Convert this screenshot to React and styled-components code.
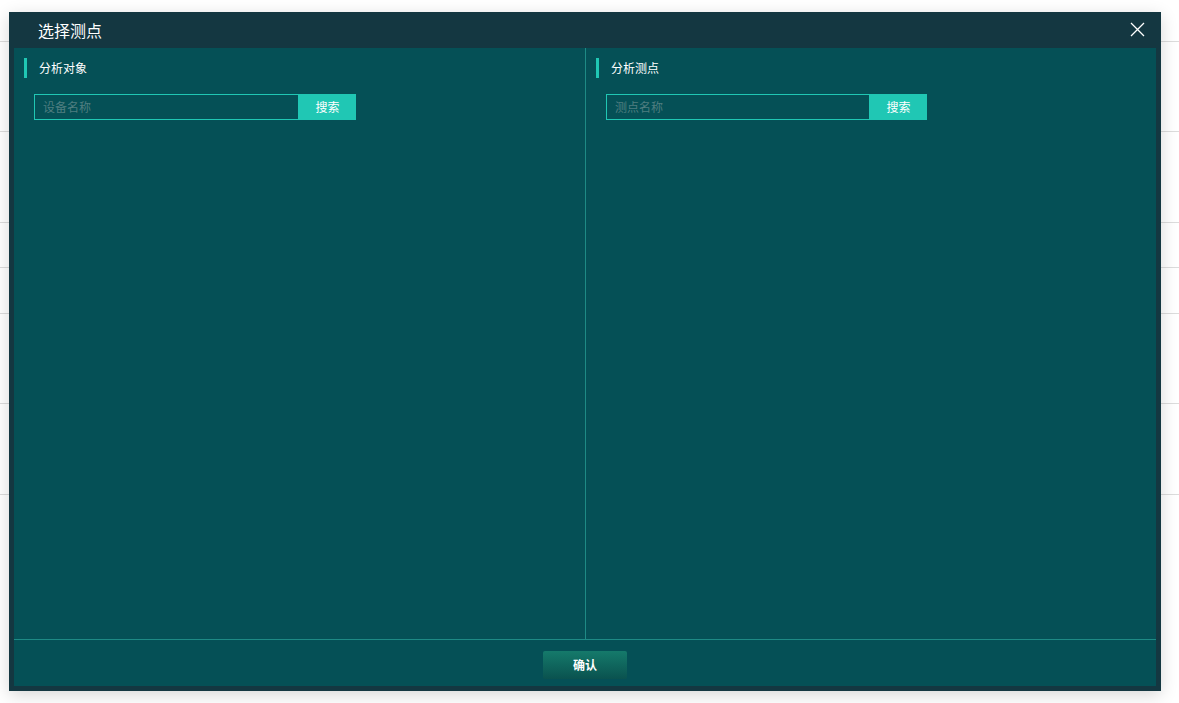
import styled, { createGlobalStyle } from "styled-components";

const GlobalStyle = createGlobalStyle`
  html, body {
    margin: 0;
    padding: 0;
    background: #ffffff;
    font-family: "Noto Sans CJK SC", "Noto Sans", sans-serif;
  }
`;

const Page = styled.div`
  position: relative;
  width: 1179px;
  height: 703px;
  overflow: hidden;
  background: #ffffff;
`;

const BgRow = styled.div`
  height: ${({ h }) => h}px;
  border-bottom: 1px solid #dcdcdc;
  box-sizing: border-box;
`;

const Modal = styled.div`
  position: absolute;
  left: 9px;
  top: 12px;
  width: 1152px;
  height: 679px;
  display: flex;
  flex-direction: column;
  background: #143741;
  box-shadow: 0 4px 16px rgba(0, 0, 0, 0.16);
  padding: 0 5px 5px;
  box-sizing: border-box;
`;

const Header = styled.div`
  height: 36px;
  flex: none;
  display: flex;
  align-items: center;
  justify-content: space-between;
  padding: 0 9px 1px 24px;
  box-sizing: border-box;
`;

const Title = styled.span`
  color: #ffffff;
  font-size: 16px;
`;

const Close = styled.button`
  width: 20px;
  height: 20px;
  padding: 0;
  border: 0;
  background: none;
  display: flex;
  align-items: center;
  justify-content: center;
  cursor: pointer;
`;

const Body = styled.div`
  flex: 1;
  display: flex;
  flex-direction: column;
  background: #055056;
`;

const Panels = styled.div`
  flex: 1;
  display: grid;
  grid-template-columns: 571px 1fr;
  border-bottom: 1px solid #1e8a85;
  padding-bottom: 2px;
`;

const Panel = styled.div`
  padding: 10px 10px 0;
  border-left: ${({ divided }) => (divided ? "1px solid #1e8a85" : "none")};
  margin-bottom: -2px;
`;

const SectionTitle = styled.div`
  height: 20px;
  display: flex;
  align-items: center;
  border-left: 3px solid #20c7b4;
  padding-left: 12px;
  padding-bottom: 1px;
  box-sizing: border-box;
  color: #ffffff;
  font-size: 12px;
`;

const SearchRow = styled.div`
  display: flex;
  margin: 16px 0 0 10px;
  height: 26px;
`;

const Input = styled.input`
  width: ${({ w }) => w}px;
  height: 26px;
  box-sizing: border-box;
  border: 1px solid #20c7b4;
  background: transparent;
  color: #ffffff;
  font-family: inherit;
  font-size: 12px;
  padding: 0 8px 2px;
  outline: none;

  &::placeholder {
    color: #4f7e80;
  }
`;

const SearchButton = styled.button`
  width: 57px;
  height: 26px;
  border: 0;
  background: #20c7b4;
  color: #ffffff;
  font-family: inherit;
  font-size: 12px;
  padding: 0 0 2px;
  cursor: pointer;
`;

const Footer = styled.div`
  height: 46px;
  flex: none;
  display: flex;
  align-items: flex-start;
  justify-content: center;
  padding-top: 11px;
  box-sizing: border-box;
`;

const ConfirmButton = styled.button`
  width: 84px;
  height: 28px;
  border: 0;
  border-radius: 2px;
  background: linear-gradient(180deg, #157a6b 0%, #0a524f 100%);
  color: #ffffff;
  font-family: inherit;
  font-size: 12px;
  font-weight: bold;
  padding: 0 0 2px;
  cursor: pointer;
`;

const rows = [42, 90, 91, 45, 46, 90, 91];

const SearchPanel = ({ title, placeholder, width, divided }) => (
  <Panel divided={divided}>
    <SectionTitle>{title}</SectionTitle>
    <SearchRow>
      <Input w={width} placeholder={placeholder} />
      <SearchButton>搜索</SearchButton>
    </SearchRow>
  </Panel>
);

export default function App() {
  return (
    <Page>
      <GlobalStyle />
      {rows.map((h, i) => (
        <BgRow key={i} h={h} />
      ))}
      <Modal>
        <Header>
          <Title>选择测点</Title>
          <Close aria-label="关闭">
            <svg width="15" height="15" viewBox="0 0 15 15">
              <path d="M1 1L14 14M14 1L1 14" stroke="#ffffff" strokeWidth="1.3" />
            </svg>
          </Close>
        </Header>
        <Body>
          <Panels>
            <SearchPanel title="分析对象" placeholder="设备名称" width={265} />
            <SearchPanel title="分析测点" placeholder="测点名称" width={264} divided />
          </Panels>
          <Footer>
            <ConfirmButton>确认</ConfirmButton>
          </Footer>
        </Body>
      </Modal>
    </Page>
  );
}
